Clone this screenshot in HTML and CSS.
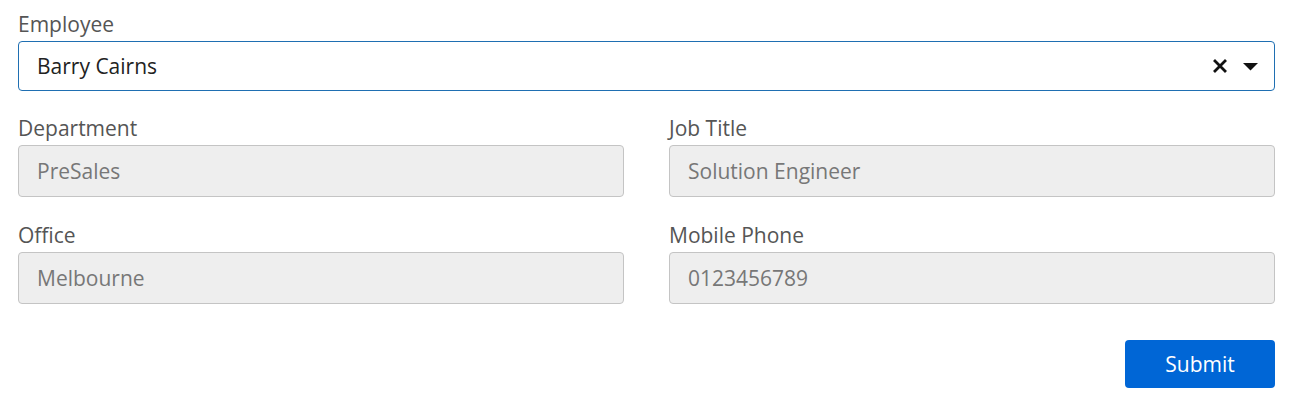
FILE: index.html
```html
<!DOCTYPE html>
<html>
<head>
<meta charset="utf-8">
<link rel="stylesheet" href="styles.css">
</head>
<body>
<form class="form">
  <div class="field">
    <label class="label">Employee</label>
    <div class="select">
      <span class="select-value">Barry Cairns</span>
      <span class="select-icons">
        <svg class="icon-clear" width="14" height="14" viewBox="0 0 14 14"><path d="M2 2 L12 12 M12 2 L2 12" stroke="#111" stroke-width="2.8" stroke-linecap="square"/></svg>
        <svg class="icon-caret" width="15" height="8" viewBox="0 0 15 8"><path d="M0 0 H15 L7.5 7.5 Z" fill="#111"/></svg>
      </span>
    </div>
  </div>
  <div class="grid">
    <div class="field">
      <label class="label">Department</label>
      <div class="input disabled">PreSales</div>
    </div>
    <div class="field">
      <label class="label">Job Title</label>
      <div class="input disabled">Solution Engineer</div>
    </div>
    <div class="field">
      <label class="label">Office</label>
      <div class="input disabled">Melbourne</div>
    </div>
    <div class="field">
      <label class="label">Mobile Phone</label>
      <div class="input disabled">0123456789</div>
    </div>
  </div>
  <div class="actions">
    <button type="button" class="btn">Submit</button>
  </div>
</form>
</body>
</html>
```

FILE: styles.css
```css
html, body {
  margin: 0;
  padding: 0;
  background: #fff;
}
body {
  font-family: "Open Sans", "Noto Sans", sans-serif;
  font-size: 21px;
}
.form {
  padding: 10px 17px 0 18px;
  display: flex;
  flex-direction: column;
  gap: 23px;
}
.field {
  display: flex;
  flex-direction: column;
  gap: 3px;
}
.label {
  line-height: 28px;
  color: #555;
}
.select {
  box-sizing: border-box;
  height: 50px;
  border: 1px solid #1f6fb2;
  border-radius: 4px;
  display: flex;
  align-items: center;
  padding: 0 16px 0 18px;
  color: #222;
}
.select-value {
  flex: 1;
}
.select-icons {
  display: flex;
  align-items: center;
  gap: 16px;
}
.icon-caret {
  margin-top: 1px;
}
.grid {
  display: grid;
  grid-template-columns: 1fr 1fr;
  column-gap: 45px;
  row-gap: 24px;
}
.input {
  box-sizing: border-box;
  height: 52px;
  border: 1px solid #c4c4c4;
  border-radius: 4px;
  display: flex;
  align-items: center;
  padding: 0 18px;
}
.input.disabled {
  background: #eeeeee;
  color: #777;
}
.actions {
  display: flex;
  justify-content: flex-end;
  padding-top: 13px;
}
.btn {
  width: 150px;
  height: 48px;
  border: none;
  border-radius: 4px;
  background: #0066d6;
  color: #fff;
  font-family: inherit;
  font-size: 21px;
  padding: 0;
}
```
